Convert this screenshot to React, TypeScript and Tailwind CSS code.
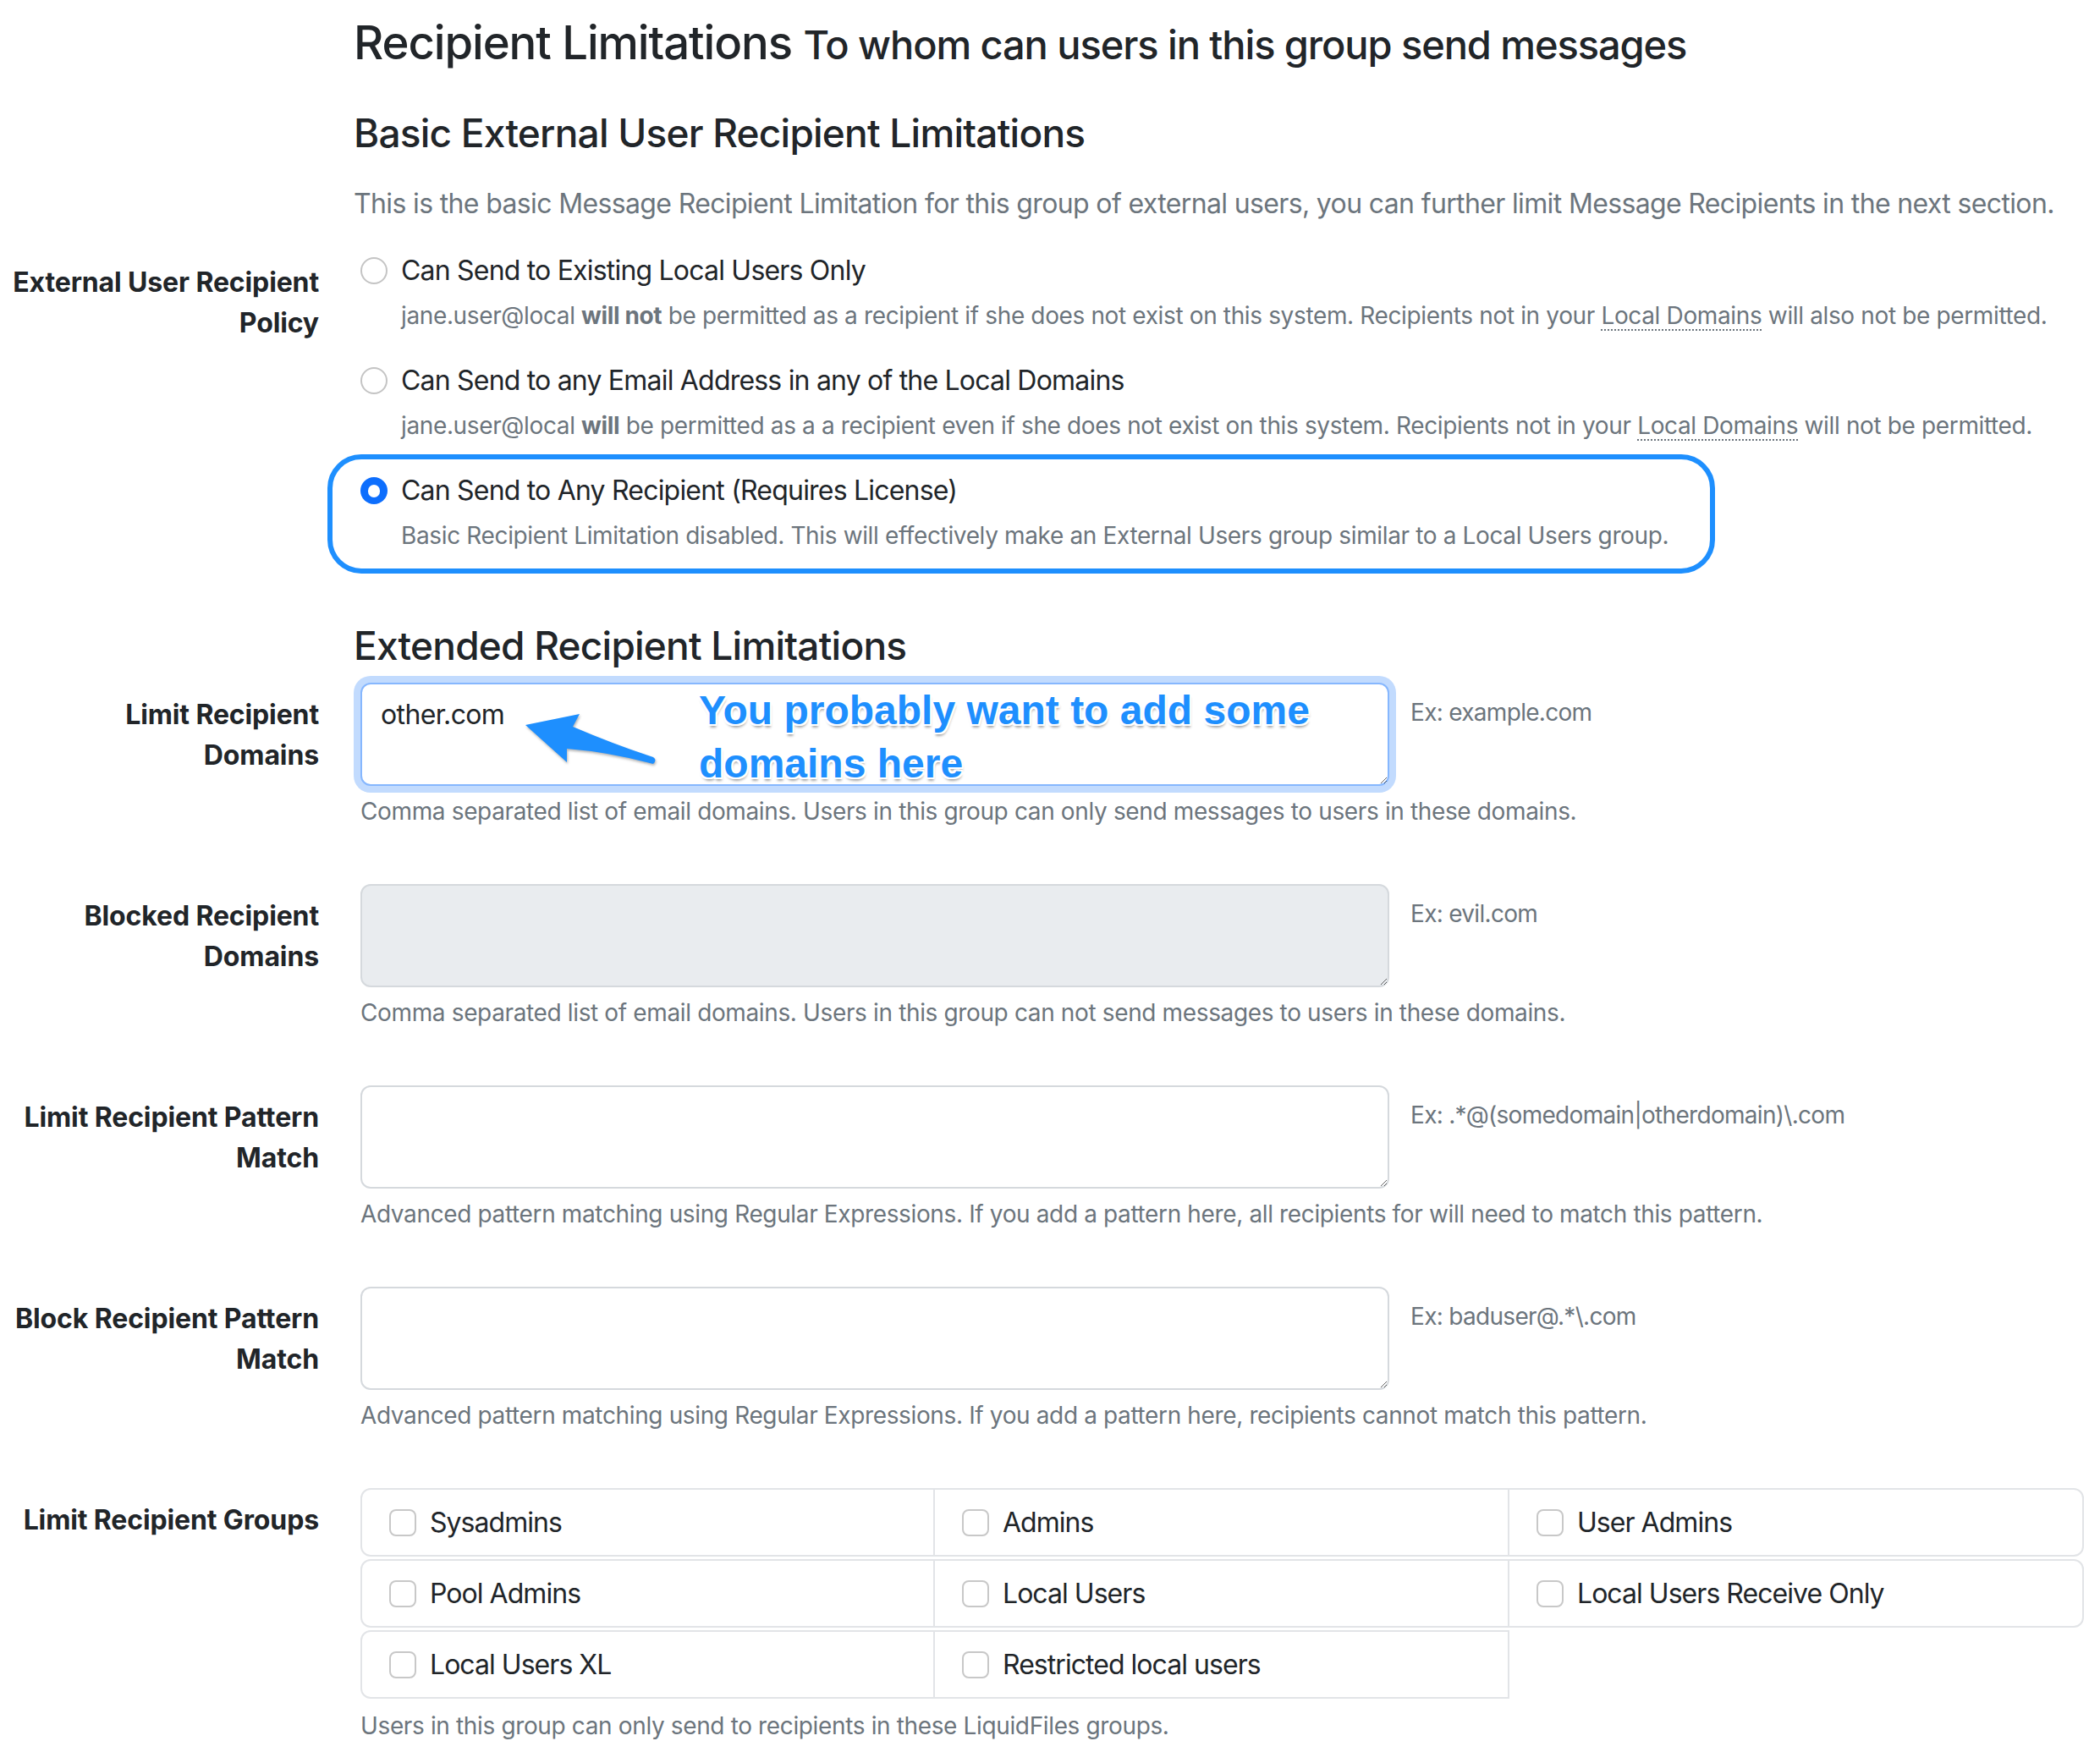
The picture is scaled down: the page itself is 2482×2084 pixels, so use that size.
import React from 'react';

const FONT = { fontFamily: 'Inter, "Noto Sans", "Liberation Sans", sans-serif' };
const LABEL = 'w-[401px] shrink-0 pr-[24px] pt-[14px] text-right font-bold text-[32px] leading-[48px] tracking-[-0.004em] whitespace-nowrap';
const HELP = 'text-[28px] leading-[42px] text-[#6c757d] tracking-[-0.013em] whitespace-nowrap';

type Row = { label: React.ReactNode; ex: string; help: string; value?: string; focus?: boolean; disabled?: boolean };

const ROWS: Row[] = [
  { label: <>Limit Recipient<br />Domains</>, ex: 'Ex: example.com', value: 'other.com', focus: true, help: 'Comma separated list of email domains. Users in this group can only send messages to users in these domains.' },
  { label: <>Blocked Recipient<br />Domains</>, ex: 'Ex: evil.com', disabled: true, help: 'Comma separated list of email domains. Users in this group can not send messages to users in these domains.' },
  { label: <>Limit Recipient Pattern<br />Match</>, ex: 'Ex: .*@(somedomain|otherdomain)\\.com', help: 'Advanced pattern matching using Regular Expressions. If you add a pattern here, all recipients for will need to match this pattern.' },
  { label: <>Block Recipient Pattern<br />Match</>, ex: 'Ex: baduser@.*\\.com', help: 'Advanced pattern matching using Regular Expressions. If you add a pattern here, recipients cannot match this pattern.' },
];

const GROUPS = [
  ['Sysadmins', 'Admins', 'User Admins'],
  ['Pool Admins', 'Local Users', 'Local Users Receive Only'],
  ['Local Users XL', 'Restricted local users'],
];

function Radio({ checked }: { checked?: boolean }) {
  return checked ? (
    <span className="w-[32px] h-[32px] rounded-full bg-[#0d6efd] flex items-center justify-center shrink-0">
      <span className="w-[14px] h-[15px] rounded-full bg-white" />
    </span>
  ) : (
    <span className="w-[32px] h-[32px] rounded-full border-2 border-[#c4c4c4] bg-white shrink-0" />
  );
}

function Abbr({ children }: { children: React.ReactNode }) {
  return <span className="underline decoration-dotted decoration-[2px] underline-offset-[6px]">{children}</span>;
}

function Choice({ checked, title, children, first }: { checked?: boolean; title: string; children: React.ReactNode; first?: boolean }) {
  return (
    <div className={first ? '' : 'mt-[32px]'}>
      <div className="flex items-center gap-[16px] h-[48px] text-[32px] leading-[48px] tracking-[-0.025em]">
        <Radio checked={checked} />
        <span className="whitespace-nowrap">{title}</span>
      </div>
      <p className={`${HELP} mt-[8px] pl-[48px]`}>{children}</p>
    </div>
  );
}

export default function App() {
  return (
    <div className="relative w-[2482px] min-h-[2084px] bg-white text-[#212529]" style={FONT}>
      <div className="ml-[418px] pt-[16px]">
        <h3 className="h-[68px] leading-[68px] text-[54.5px] font-medium tracking-[-0.02em] whitespace-nowrap">
          Recipient Limitations <small className="text-[47px]">To whom can users in this group send messages</small>
        </h3>
        <h4 className="mt-[44px] h-[58px] leading-[58px] text-[46px] font-medium tracking-[-0.017em]">Basic External User Recipient Limitations</h4>
        <p className="mt-[31px] h-[48px] text-[32px] leading-[48px] text-[#6c757d] tracking-[-0.02em] whitespace-nowrap">
          This is the basic Message Recipient Limitation for this group of external users, you can further limit Message Recipients in the next section.
        </p>
      </div>

      <div className="flex mt-[31px]">
        <div className={LABEL}>External User Recipient<br />Policy</div>
        <div className="pl-[25px]">
          <Choice first title="Can Send to Existing Local Users Only">
            jane.user@local <b>will not</b> be permitted as a recipient if she does not exist on this system. Recipients not in your <Abbr>Local Domains</Abbr> will also not be permitted.
          </Choice>
          <Choice title="Can Send to any Email Address in any of the Local Domains">
            jane.user@local <b>will</b> be permitted as a a recipient even if she does not exist on this system. Recipients not in your <Abbr>Local Domains</Abbr> will not be permitted.
          </Choice>
          <Choice checked title="Can Send to Any Recipient (Requires License)">
            Basic Recipient Limitation disabled. This will effectively make an External Users group similar to a Local Users group.
          </Choice>
        </div>
      </div>

      <h4 className="ml-[418px] mt-[80px] h-[58px] leading-[58px] text-[46px] font-medium tracking-[-0.017em]">Extended Recipient Limitations</h4>

      <div className="mt-[15px]">
        {ROWS.map((r, i) => (
          <div key={i} className={`flex ${i ? 'mt-[65px]' : ''}`}>
            <div className={LABEL}>{r.label}</div>
            <div className="pl-[25px]">
              <div className="flex">
                <textarea
                  readOnly
                  defaultValue={r.value ?? ''}
                  className={`w-[1216px] h-[122px] rounded-[12px] border-2 px-[22px] py-[12px] text-[32px] leading-[48px] tracking-[-0.02em] text-[#212529] outline-none ${r.focus ? 'border-[#86b7fe] shadow-[0_0_0_8px_rgba(13,110,253,0.25)]' : 'border-[#d5d9dd]'} ${r.disabled ? 'bg-[#e9ecef]' : 'bg-white'}`}
                  style={FONT}
                />
                <span className="ml-[25px] pt-[14px] text-[28px] leading-[42px] tracking-[-0.025em] text-[#6c757d] whitespace-nowrap">{r.ex}</span>
              </div>
              <p className={`${HELP} mt-[9px]`}>{r.help}</p>
            </div>
          </div>
        ))}

        <div className="flex mt-[65px]">
          <div className={LABEL}>Limit Recipient Groups</div>
          <div className="pl-[25px]">
            <div className="flex flex-col gap-[3px] w-[2039px]">
              {GROUPS.map((row, ri) => (
                <div key={ri} className="flex">
                  {row.map((g, ci) => (
                    <div
                      key={g}
                      className={`h-[81px] flex items-center border-2 border-[#e2e4e7] pl-[32px] gap-[16px] text-[32px] tracking-[-0.03em] ${ci ? '-ml-[2px] w-[681px]' : 'w-[679px] rounded-l-[12px]'} ${ci === 2 ? 'rounded-r-[12px]' : ''}`}
                    >
                      <span className="w-[32px] h-[32px] rounded-[8px] border-2 border-[#c8c8c8] shrink-0" />
                      <span className="whitespace-nowrap">{g}</span>
                    </div>
                  ))}
                </div>
              ))}
            </div>
            <p className={`${HELP} mt-[11px]`}>Users in this group can only send to recipients in these LiquidFiles groups.</p>
          </div>
        </div>
      </div>

      {/* annotation overlays */}
      <div className="absolute left-[387px] top-[537px] w-[1640px] h-[141px] rounded-[40px] border-[6px] border-[#1e8ffe]" />
      <svg className="absolute left-[600px] top-[820px] w-[200px] h-[100px]" viewBox="0 0 200 100" style={{ filter: 'drop-shadow(1px 2px 1.5px rgba(0,0,0,0.3))' }}>
        <path d="M21 37 L85 24 L77 39 Q126 60 172 75 Q177 78 172 83 Q120 69 70 65 L70 81 Z" fill="#1e8ffe" />
      </svg>
      <div
        className="absolute left-[826px] top-[808px] text-[48px] leading-[63px] font-bold text-[#1e8ffe] whitespace-nowrap"
        style={{ fontFamily: '"Liberation Sans", Arial, sans-serif', textShadow: '0 2px 0 #fff, 0 -2px 0 #fff, 2px 0 0 #fff, -2px 0 0 #fff, 2px 2px 0 #fff, -2px -2px 0 #fff, 2px -2px 0 #fff, -2px 2px 0 #fff, 1px 4px 3px rgba(0,0,0,0.35)' }}
      >
        You probably want to add some<br />domains here
      </div>
    </div>
  );
}
